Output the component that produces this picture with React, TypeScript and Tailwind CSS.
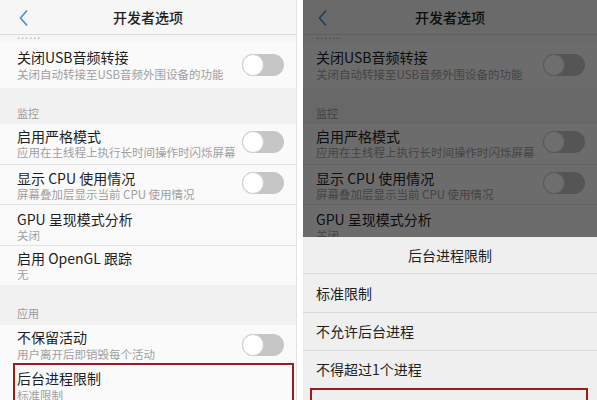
const font = { fontFamily: '"Noto Sans CJK SC", "Noto Sans", sans-serif' };

function Toggle() {
  return (
    <div className="relative h-[22px] w-[42px] shrink-0 rounded-full bg-[#c6c6c6]">
      <div className="absolute left-0 top-0 h-[22px] w-[22px] rounded-full border border-[#d0d0d0] bg-white" />
    </div>
  );
}

type RowProps = { title: string; sub: string; toggle?: string; pad: string; h: string; pt: string; gap?: string; line?: boolean };

function Row({ title, sub, toggle, pad, h, pt, gap = 'mt-0', line }: RowProps) {
  return (
    <div className={`flex items-start ${h} ${pad} pr-[12px] ${line ? 'border-t border-[#e2e2e2]' : ''}`}>
      <div className={`min-w-0 flex-1 ${pt}`}>
        <div className="whitespace-nowrap text-[14px] leading-[18px] text-[#1e1e1e]">{title}</div>
        <div className={`${gap} whitespace-nowrap text-[11.5px] leading-[15px] text-[#a0a0a0]`}>{sub}</div>
      </div>
      {toggle && <div className={toggle}><Toggle /></div>}
    </div>
  );
}

function Section({ label, pad, h, pb }: { label: string; pad: string; h: string; pb: string }) {
  return (
    <div className={`flex ${h} items-end bg-[#f1f1f1] ${pad} ${pb} text-[11px] leading-[14px] text-[#9a9a9a]`}>{label}</div>
  );
}

function Panel({ pad, boxMargin, boxPad, dim }: { pad: string; boxMargin: string; boxPad: string; dim?: boolean }) {
  return (
    <div className="relative h-full flex-1 overflow-hidden bg-[#fafafa]">
      <div className="relative flex h-[35px] items-center justify-center border-b border-[#dadada] bg-[#f6f6f6]">
        <svg className={`absolute top-[9px] ${dim ? 'left-[14px]' : 'left-[18px]'}`} width="12" height="18" viewBox="0 0 12 18">
          <polyline points="9,1.5 2.5,9 9,16.5" fill="none" stroke="#4b8fd0" strokeWidth="1.6" />
        </svg>
        <span className="text-[14px] font-medium text-[#1e1e1e]">开发者选项</span>
      </div>
      <div className={`h-[7px] overflow-hidden bg-[#f6f6f6] ${pad}`}>
        <div className="mt-[-6px] text-[11px] leading-[10px] tracking-[1px] text-[#aaa]">......</div>
      </div>
      <Row pad={pad} h="h-[46px]" pt="pt-[6px]" gap="mt-[1px]" toggle="mt-[12px]" title="关闭USB音频转接" sub="关闭自动转接至USB音频外围设备的功能" />
      <Section pad={pad} h="h-[36px]" pb="pb-[4px]" label="监控" />
      <Row pad={pad} h="h-[40px]" pt="pt-[3px]" toggle="mt-[7px]" title="启用严格模式" sub="应用在主线程上执行长时间操作时闪烁屏幕" />
      <Row pad={pad} h="h-[40px]" pt="pt-[4px]" toggle="mt-[7px]" line title="显示 CPU 使用情况" sub="屏幕叠加层显示当前 CPU 使用情况" />
      <Row pad={pad} h="h-[41px]" pt="pt-[5px]" line title="GPU 呈现模式分析" sub="关闭" />
      <Row pad={pad} h="h-[40px]" pt="pt-[3px]" line title="启用 OpenGL 跟踪" sub="无" />
      <Section pad={pad} h="h-[40px]" pb="pb-[5px]" label="应用" />
      <Row pad={pad} h="h-[38px]" pt="pt-[3px]" gap="mt-[1px]" toggle="mt-[9px]" title="不保留活动" sub="用户离开后即销毁每个活动" />
      <div className={`${boxMargin} h-[60px] border-2 border-[#9c1b1b] ${boxPad} pt-[4px]`}>
        <div className="text-[14px] leading-[18px] text-[#1e1e1e]">后台进程限制</div>
        <div className="mt-[1px] text-[11.5px] leading-[15px] text-[#a0a0a0]">标准限制</div>
      </div>

      {dim && (
        <>
          <div className="absolute inset-0 bg-black/[0.57]" />
          <div className="absolute inset-x-0 bottom-0 top-[237px] bg-[#efefef] text-[14px] text-[#1e1e1e]">
            <div className="flex h-[36px] items-center justify-center">后台进程限制</div>
            <div className="flex h-[39px] items-center border-t border-[#d8d8d8] pl-[13px]">标准限制</div>
            <div className="flex h-[38px] items-center border-t border-[#d8d8d8] pl-[13px]">不允许后台进程</div>
            <div className="flex h-[37px] items-center border-t border-[#d8d8d8] pl-[13px]">不得超过1个进程</div>
            <div className="ml-[7px] mr-[9px] mt-[1px] h-[40px] border-2 border-[#9c1b1b]" />
          </div>
        </>
      )}
    </div>
  );
}

export default function App() {
  return (
    <div className="flex h-[400px] w-[597px] overflow-hidden bg-white" style={font}>
      <div className="flex h-full w-[297px] border-r border-[#e4e4e4]">
        <Panel pad="pl-[17px]" boxMargin="ml-[13px] mr-[2px]" boxPad="pl-[2px]" />
      </div>
      <div className="w-[6px] bg-white" />
      <div className="flex h-full w-[294px]">
        <Panel pad="pl-[13px]" boxMargin="ml-[7px] mr-[9px]" boxPad="pl-[4px]" dim />
      </div>
    </div>
  );
}
